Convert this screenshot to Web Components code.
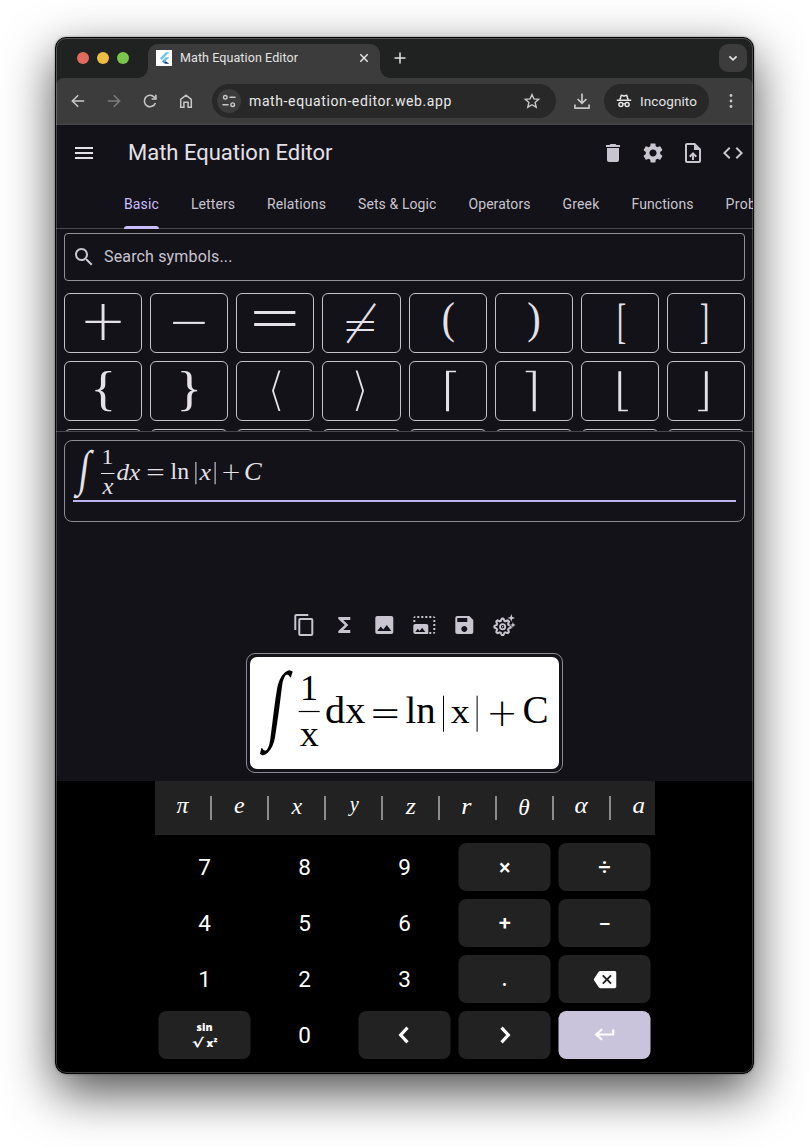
<!DOCTYPE html>
<html lang="en">
<head>
<meta charset="utf-8">
<title>Math Equation Editor</title>
<style>
html,body{margin:0;padding:0;background:#fff;width:809px;height:1147px;overflow:hidden}
body{font-family:Roboto,sans-serif}
</style>
</head>
<body>
<browser-window>
  <tab-strip slot="tabs"></tab-strip>
  <nav-toolbar slot="toolbar"></nav-toolbar>
  <equation-app></equation-app>
</browser-window>
<script>
const SERIF = '"Liberation Serif", serif';
const ctx = document.createElement('canvas').getContext('2d');

const define = (name, html, setup) => customElements.define(name, class extends HTMLElement {
  connectedCallback() {
    if (this.shadowRoot) return;
    const root = this.attachShadow({ mode: 'open' });
    const t = document.createElement('template');
    t.innerHTML = typeof html === 'function' ? html(this) : html;
    root.append(t.content.cloneNode(true));
    if (setup) setup(this, root);
  }
});

/* One glyph run whose ink fills the box x, y, w, h of its drawing. */
const FACES = {
  i: ['italic 400', SERIF], r: ['normal 400', SERIF],
  t: ['normal 200', '"DejaVu Sans Light","DejaVu Sans",sans-serif'],
  d: ['normal 400', '"DejaVu Sans",sans-serif'],
  k: ['normal 400', SERIF],
  h: ['normal 400', '"DejaVu Sans",sans-serif'],
  m: ['normal 500', 'Roboto,sans-serif'],
  b: ['normal 800', '"Open Sans",sans-serif'],
  D: ['normal 700', '"DejaVu Sans",sans-serif']
};
const ink = ([ch, x, y, w, h, f]) => {
  if (ch === 'rule') return `<rect x="${x}" y="${y}" width="${w}" height="${h}" fill="currentColor"/>`;
  const face = f || 'r';
  const [style, family] = FACES[face];
  const slant = face === 'k' ? 0.13 : 0;      /* slanted integral sign */
  const thin = face === 'h' ? 2.1 : 0;        /* hairline brackets: trimmed by a stroke of the ground colour */
  x -= thin / 2; y -= thin / 2; w += thin; h += thin;
  ctx.font = `${style} 100px ${family}`;
  const m = ctx.measureText(ch);
  const sx = (w - slant * h) / (m.actualBoundingBoxLeft + m.actualBoundingBoxRight);
  const sy = h / (m.actualBoundingBoxAscent + m.actualBoundingBoxDescent);
  const base = m.actualBoundingBoxAscent * sy;
  const tx = x + m.actualBoundingBoxLeft * sx + slant * (h - base), ty = y + base;
  const [fs, fw] = style.split(' ');
  return `<text transform="matrix(${sx} 0 ${-slant * sy} ${sy} ${tx} ${ty})" fill="currentColor" style='font:${fs} ${fw} 100px ${family};${thin ? `stroke:#131218;stroke-width:${thin};vector-effect:non-scaling-stroke` : ''}'>${ch.replace('<', '&lt;')}</text>`;
};

/* Math drawing: width, height and a JSON list of runs. */
define('math-ink', el => {
  const w = el.getAttribute('w'), h = el.getAttribute('h');
  return `<style>:host{display:block;width:${w}px;height:${h}px}svg{display:block;overflow:visible}</style>
  <svg width="${w}" height="${h}">${JSON.parse(el.getAttribute('runs')).map(ink).join('')}</svg>`;
});
const math = (w, h, runs) => `<math-ink w="${w}" h="${h}" runs='${JSON.stringify(runs)}'></math-ink>`;

/* Label tracked to a set width. */
define('fit-text', `<style>:host{display:block;white-space:nowrap}span{display:inline-block}</style><span><slot></slot></span>`, (el, root) => {
  const w = +el.getAttribute('w'), s = root.querySelector('span');
  el.style.width = w + 'px';
  s.style.letterSpacing = (w - s.getBoundingClientRect().width) / el.textContent.length + 'px';
});

const ICONS = {
  menu: 'M3 18h18v-2H3v2zm0-5h18v-2H3v2zm0-7v2h18V6H3z',
  delete: 'M6 19c0 1.1.9 2 2 2h8c1.1 0 2-.9 2-2V7H6v12zM19 4h-3.5l-1-1h-5l-1 1H5v2h14V4z',
  settings: 'M19.14 12.94c.04-.3.06-.61.06-.94 0-.32-.02-.64-.07-.94l2.03-1.58c.18-.14.23-.41.12-.61l-1.92-3.32c-.12-.22-.37-.29-.59-.22l-2.39.96c-.5-.38-1.03-.7-1.62-.94l-.36-2.54c-.04-.24-.24-.41-.48-.41h-3.84c-.24 0-.43.17-.47.41l-.36 2.54c-.59.24-1.13.57-1.62.94l-2.39-.96c-.22-.08-.47 0-.59.22L2.74 8.87c-.12.21-.08.47.12.61l2.03 1.58c-.05.3-.09.63-.09.94s.02.64.07.94l-2.03 1.58c-.18.14-.23.41-.12.61l1.92 3.32c.12.22.37.29.59.22l2.39-.96c.5.38 1.03.7 1.62.94l.36 2.54c.05.24.24.41.48.41h3.84c.24 0 .44-.17.47-.41l.36-2.54c.59-.24 1.13-.56 1.62-.94l2.39.96c.22.08.47 0 .59-.22l1.92-3.32c.12-.22.07-.47-.12-.61l-2.01-1.58zM12 15.6c-1.98 0-3.6-1.62-3.6-3.6s1.62-3.6 3.6-3.6 3.6 1.62 3.6 3.6-1.62 3.6-3.6 3.6z',
  upload: 'M14 2H6c-1.1 0-1.99.9-1.99 2L4 20c0 1.1.89 2 1.99 2H18c1.1 0 2-.9 2-2V8l-6-6zm4 18H6V4h7v5h5v11zM8 15.01l1.41 1.41L11 14.84V19h2v-4.16l1.59 1.59L16 15.01 12.01 11 8 15.01z',
  code: 'M9.4 16.6L4.8 12l4.6-4.6L8 6l-6 6 6 6 1.4-1.4zm5.2 0l4.6-4.6-4.6-4.6L16 6l6 6-6 6-1.4-1.4z',
  search: 'M15.5 14h-.79l-.28-.27C15.41 12.59 16 11.11 16 9.5 16 5.91 13.09 3 9.5 3S3 5.91 3 9.5 5.91 16 9.5 16c1.61 0 3.09-.59 4.23-1.57l.27.28v.79l5 4.99L20.49 19l-4.99-5zm-6 0C7.01 14 5 11.99 5 9.5S7.01 5 9.5 5 14 7.01 14 9.5 11.99 14 9.5 14z',
  copy: 'M16 1H4c-1.1 0-2 .9-2 2v14h2V3h12V1zm3 4H8c-1.1 0-2 .9-2 2v14c0 1.1.9 2 2 2h11c1.1 0 2-.9 2-2V7c0-1.1-.9-2-2-2zm0 16H8V7h11v14z',
  functions: 'M18 4H6v2l6.5 6L6 18v2h12v-3h-7l5-5-5-5h7z',
  image: 'M21 19V5c0-1.1-.9-2-2-2H5c-1.1 0-2 .9-2 2v14c0 1.1.9 2 2 2h14c1.1 0 2-.9 2-2zM8.5 13.5l2.5 3.01L14.5 12l4.5 6H5l3.5-4.5z',
  resize: 'M21 15h2v2h-2v-2zm0-4h2v2h-2v-2zm2 8h-2v2c1 0 2-1 2-2zM13 3h2v2h-2V3zm8 4h2v2h-2V7zm0-4v2h2c0-1-1-2-2-2zM1 7h2v2H1V7zm16-4h2v2h-2V3zm0 16h2v2h-2v-2zM3 3C2 3 1 4 1 5h2V3zm6 0h2v2H9V3zM5 3h2v2H5V3zm-2 8c-1.1 0-2 .9-2 2v6c0 1.1.9 2 2 2h12c.6 0 1-.4 1-1v-7c0-1.1-.9-2-2-2H3zm0 8l2.5-3.21 1.79 2.15 2.5-3.22L13 19H3z',
  save: 'M17 3H5c-1.11 0-2 .9-2 2v14c0 1.1.89 2 2 2h14c1.1 0 2-.9 2-2V7l-4-4zm-5 16c-1.66 0-3-1.34-3-3s1.34-3 3-3 3 1.34 3 3-1.34 3-3 3zm3-10H5V5h10v4z',
  backspace: 'M22 3H7c-.69 0-1.23.35-1.59.88L0 12l5.41 8.11c.36.53.9.89 1.59.89h15c1.1 0 2-.9 2-2V5c0-1.1-.9-2-2-2zm-3 12.59L17.59 17 14 13.41 10.41 17 9 15.59 12.59 12 9 8.41 10.41 7 14 10.59 17.59 7 19 8.41 15.41 12 19 15.59z'
};
const line = (d, w = 1.6, extra = '') => `<path d="${d}" fill="none" stroke="currentColor" stroke-width="${w}" ${extra}/>`;
const gear = () => {
  let p = '';
  for (let i = 0; i < 64; i++) {
    const a = i / 64 * Math.PI * 2, r = 7.2 + 1 * Math.max(-1, Math.min(1, Math.cos(8 * a) * 1.6));
    p += (i ? 'L' : 'M') + (10.3 + r * Math.cos(a)).toFixed(2) + ' ' + (13.8 + r * Math.sin(a)).toFixed(2);
  }
  return p + 'Z';
};
const DRAWN = {
  back: line('M18.2 12H6.6M12.2 6.2 6.4 12l5.8 5.8', 1.6),
  forward: line('M5.8 12H17.4M11.8 6.2l5.8 5.8-5.8 5.8', 1.6),
  reload: line('M17.4 14a5.7 5.7 0 1 1-1.2-5.9L17.8 9.6', 1.6) + line('M17.9 5.7v4.3h-4.3', 1.6),
  home: line('M6.7 18.2V10.3L12 6.2l5.3 4.1v7.9h-3.2v-5h-4.2v5z', 1.5),
  tune: line('M13 8.3h5M6 15.7h5', 1.6, 'stroke-linecap="round"') + '<circle cx="8.3" cy="8.3" r="1.8" fill="none" stroke="currentColor" stroke-width="1.4"/><circle cx="15.7" cy="15.7" r="1.8" fill="none" stroke="currentColor" stroke-width="1.4"/>',
  star: line('M12 5.5l1.9 4.4 4.8.4-3.6 3.2 1.1 4.7-4.2-2.5-4.2 2.5 1.1-4.7-3.6-3.2 4.8-.4z', 1.4),
  download: line('M12 4.5v9.5M7.6 10l4.4 4.4L16.4 10', 1.7) + line('M4.9 15.5v3.6h14.2v-3.6', 1.7, 'stroke-linejoin="round"'),
  incognito: line('M4.8 11.3h14.4', 1.5) + line('M7.8 11l1.5-4.8 2.7.8 2.7-.8 1.5 4.8', 1.5, 'stroke-linejoin="round"') + '<circle cx="8.9" cy="15.4" r="2" fill="none" stroke="currentColor" stroke-width="1.5"/><circle cx="15.1" cy="15.4" r="2" fill="none" stroke="currentColor" stroke-width="1.5"/>' + line('M10.7 15q1.3-.7 2.6 0', 1.2),
  dots: '<g fill="currentColor"><circle cx="12" cy="6.5" r="1.4"/><circle cx="12" cy="12" r="1.4"/><circle cx="12" cy="17.5" r="1.4"/></g>',
  close: line('M8.3 8.3l7.4 7.4M15.7 8.3l-7.4 7.4', 1.5),
  add: line('M12 6.5v11M6.5 12h11', 1.5),
  caret: line('M8.4 10.3l3.6 3.5 3.6-3.5', 1.8),
  left: line('M15 4.7 8.2 12 15 19.3', 3.2),
  right: line('M9 4.7 15.8 12 9 19.3', 3.2),
  enter: line('M20.7 6.5v5H4M9.5 6.3 3.7 11.5l5.8 5.3', 2.2),
  magic: line(gear(), 2) + '<circle cx="10.3" cy="13.8" r="2.6" fill="none" stroke="currentColor" stroke-width="1.8"/><circle cx="10.3" cy="13.8" r=".8" fill="currentColor"/><path fill="currentColor" stroke="#131218" stroke-width="1" paint-order="stroke" d="M19 1l1 2.9 2.9 1-2.9 1-1 2.9-1-2.9-2.9-1 2.9-1zM20.6 9l.8 2.2 2.2.8-2.2.8-.8 2.2-.8-2.2-2.2-.8 2.2-.8z"/>',
  flutter: '<path fill="#6fc1f7" d="M14.8 3.5h5.2L8.5 15 5.9 12.4zM14.8 11H20l-5.8 5.8L11.6 14.2z"/><path fill="#0d2f86" d="M11.6 19.4l2.6-2.6 5.8 4h-5.2z"/><path fill="#3a9be8" d="M9 16.8l2.6-2.6 2.6 2.6-2.6 2.6z"/>'
};
define('ui-icon', el => {
  const n = el.getAttribute('name'), s = el.getAttribute('size') || 24;
  return `<style>:host{display:block;flex:none;width:${s}px;height:${s}px}svg{display:block}</style>
  <svg width="${s}" height="${s}" viewBox="0 0 24 24">${DRAWN[n] || `<path fill="currentColor" d="${ICONS[n]}"/>`}</svg>`;
});

define('browser-window', `<style>
:host{display:block;box-sizing:border-box;padding:37px 55px 73px;width:809px;height:1147px}
.frame{display:flex;flex-direction:column;box-sizing:border-box;height:1037px;width:699px;border:1px solid #060606;border-radius:11px;overflow:hidden;position:relative;background:#202221}
.shade{border-radius:11px;height:1037px;width:699px;box-shadow:0 18px 50px rgba(0,0,0,.7),0 0 2px rgba(0,0,0,.5)}
.frame::after{content:"";position:absolute;inset:0;border:1px solid rgba(255,255,255,.22);border-radius:10px;pointer-events:none}
</style><div class="shade"><div class="frame"><slot name="tabs"></slot><slot name="toolbar"></slot><slot></slot></div></div>`);

define('tab-strip', `<style>
:host{display:flex;flex:none;height:40px;box-sizing:border-box;padding:6px 6px 0 21px;color:#e3e3e3;background:#202221}
.lights{display:flex;gap:8px;padding-top:8px;width:71px}
.lights i{width:12px;height:12px;border-radius:50%}
.tab{position:relative;display:flex;width:232px;height:34px;background:#3c3c3c;border-radius:10px 10px 0 0;box-sizing:border-box;padding:0 4px 6px 8px;align-items:center}
.tab::before,.tab::after{content:"";position:absolute;bottom:0;width:10px;height:10px}
.tab::before{left:-10px;background:radial-gradient(circle at 0 0,transparent 9.5px,#3c3c3c 10px)}
.tab::after{right:-10px;background:radial-gradient(circle at 100% 0,transparent 9.5px,#3c3c3c 10px)}
.fav{background:#fff;width:16px;height:16px;margin-right:8px}
fit-text{font-size:12.5px;flex:1;margin-top:-1px}
.add{margin:2px 0 0 8px}
.more{margin-left:auto;width:28px;height:28px;border-radius:9px;background:#3c3c3c;display:grid;place-items:center}
</style>
<div class="lights"><i style="background:#df6b5d"></i><i style="background:#ecbd42"></i><i style="background:#7ac74b"></i></div>
<div class="tab"><div class="fav"><ui-icon name="flutter" size="16"></ui-icon></div><fit-text w="118">Math Equation Editor</fit-text><div style="flex:1"></div><ui-icon name="close"></ui-icon></div>
<ui-icon class="add" name="add"></ui-icon>
<div class="more"><ui-icon name="caret"></ui-icon></div>`);

define('nav-toolbar', `<style>
:host{display:block;flex:none;height:47px;background:#202221;color:#c7c7c7}
.bar{display:flex;align-items:center;height:47px;box-sizing:border-box;padding:0 10px;background:#3c3c3c;border-bottom:1px solid #47474a;border-radius:8px 8px 0 0}
.nav{display:flex;gap:12px}
.dim{color:#7c7c7c}
.url{display:flex;align-items:center;box-sizing:border-box;width:344px;height:34px;margin-left:14px;padding:0 12px 0 5px;border-radius:17px;background:#282828;color:#e8e8e8}
.chip{width:24px;height:24px;border-radius:50%;background:#3c3c3c;margin-right:8px}
.url fit-text{font-size:14px}
.url ui-icon:last-child{margin-left:auto;color:#c7c7c7}
.inc{display:flex;align-items:center;box-sizing:border-box;width:105px;height:34px;border-radius:17px;background:#282828;padding-left:8px;margin-left:10px;color:#e3e3e3}
.inc fit-text{font-size:13.5px;font-weight:450;margin-left:4px}
.bar > ui-icon{margin-left:14px}
</style><div class="bar">
<div class="nav"><ui-icon name="back"></ui-icon><ui-icon class="dim" name="forward"></ui-icon><ui-icon name="reload"></ui-icon><ui-icon name="home"></ui-icon></div>
<div class="url"><div class="chip"><ui-icon name="tune"></ui-icon></div><fit-text w="203">math-equation-editor.web.app</fit-text><ui-icon name="star"></ui-icon></div>
<ui-icon name="download"></ui-icon>
<div class="inc"><ui-icon name="incognito"></ui-icon><fit-text w="57">Incognito</fit-text></div>
<ui-icon name="dots" style="margin-left:10px"></ui-icon></div>`);

define('app-header', `<style>
:host{display:block;height:104px;box-sizing:border-box;border-bottom:1px solid #48464c;color:#e4e1e9}
.top{display:flex;align-items:center;height:56px;padding:0 7px 0 16px}
.top fit-text{font-size:22px;margin:-2px 0 0 32px}
.acts{display:flex;gap:16px;margin-left:auto;color:#c9c5d0;padding-right:1px}
</style><div class="top"><ui-icon name="menu"></ui-icon><fit-text w="204.5">Math Equation Editor</fit-text>
<div class="acts"><ui-icon name="delete"></ui-icon><ui-icon name="settings"></ui-icon><ui-icon name="upload"></ui-icon><ui-icon name="code"></ui-icon></div></div>
<category-tabs></category-tabs>`);

define('category-tabs', () => `<style>
:host{display:flex;gap:32px;height:48px;padding-left:68px;overflow:hidden;font-size:14px;font-weight:450;color:#c9c5d0}
div{flex:none;height:48px;line-height:47px;box-sizing:border-box}
.on{color:#cabeff;position:relative}
.on::after{content:"";position:absolute;left:0;right:0;bottom:0;height:3px;border-radius:3px 3px 0 0;background:#cabeff}
</style>` + [['Basic', 35], ['Letters', 44], ['Relations', 59], ['Sets &amp; Logic', 78.5], ['Operators', 62], ['Greek', 37], ['Functions', 62], ['Probability', 70]]
  .map(([t, w], i) => `<div class="${i ? '' : 'on'}"><fit-text w="${w}">${t}</fit-text></div>`).join(''));

const cellLeft = i => 64 + 86.125 * (i % 8);
const SYMBOLS = [
  ['+', 85, 304.7, 36, 36.3, 't'], ['−', 173, 321.6, 32.3, 2.6, 't'], ['=', 254, 311, 42, 15, 't'], ['≠', 346.7, 302.3, 29.6, 41.4, 't'],
  ['(', 442.7, 302.7, 10.6, 40.3, 'r'], [')', 528, 302.7, 10.5, 40.3, 'r'], ['[', 618.7, 303, 6.3, 40, 'r'], [']', 700.7, 303, 6.3, 40, 'r'],
  ['{', 95.3, 370.7, 16, 41, 'r'], ['}', 181.3, 370.7, 15.9, 41, 'r'], ['⟨', 271.7, 370.3, 9.3, 41, 'h'], ['⟩', 355.7, 370.3, 9.3, 41, 'h'],
  ['⌈', 445, 370.5, 11, 40.8, 'h'], ['⌉', 525, 370.5, 11, 40.8, 'h'], ['⌊', 617.7, 370.5, 10.5, 40.8, 'h'], ['⌋', 697.7, 370.5, 10.5, 40.8, 'h']
];
define('symbol-grid', () => `<style>
:host{display:grid;grid-template-columns:repeat(8,1fr);grid-auto-rows:60px;gap:8px;height:138px;overflow:hidden;margin:12px 8px 0;color:#e4e1e9}
div{box-sizing:border-box;border:1px solid #c4c1c9;border-radius:6px}
math-ink{margin:-1px}
</style>` + SYMBOLS.map(([c, x, y, w, h, f], i) => `<div>${math(78, 60, [[c, x - cellLeft(i), y - (i < 8 ? 293 : 361), w, h, f]])}</div>`).join('') + '<div></div>'.repeat(8));

define('search-field', `<style>
:host{display:flex;align-items:center;box-sizing:border-box;height:48px;margin:4px 8px 0;padding-left:7px;border:1px solid #929099;border-radius:4px;color:#c9c5d0}
fit-text{font-size:16px;margin:-2px 0 0 8px}
</style><ui-icon name="search"></ui-icon><fit-text w="128.5">Search symbols...</fit-text>`);

const shift = (runs, dx, dy) => runs.map(([c, x, y, ...r]) => [c, x - dx, y - dy, ...r]);
const INPUT = [
  ['∫', 73.3, 449, 21, 49, 'k'], ['1', 103.5, 450, 8.5, 14], ['rule', 101, 473, 13.5, 1], ['x', 102, 483, 11.3, 11, 'i'],
  ['dx', 117.3, 463.5, 22.9, 16.5, 'i'], ['=', 147.7, 469.5, 15.6, 6, 't'], ['ln', 171, 463.7, 17.8, 16],
  ['rule', 195.4, 462, 1, 22.3], ['x', 199, 469, 12, 10.9, 'i'], ['rule', 214.6, 462, 1, 22.3], ['+', 223.3, 465, 15.7, 15.7, 't'], ['C', 245.3, 463.5, 16.7, 16.7, 'i']
];
const PREVIEW = [
  ['∫', 259.3, 670, 34, 85.7, 'k'], ['1', 303, 675.7, 13, 24.3], ['rule', 298.7, 710.9, 21, 1.2], ['x', 299.7, 730, 18.7, 16],
  ['dx', 326.3, 696.7, 38.7, 26.6], ['=', 373, 709.3, 24.4, 8.7, 't'], ['ln', 406.3, 697.3, 29, 25.9],
  ['rule', 443, 695.7, 1, 36], ['x', 450.7, 707.3, 18.6, 15.9], ['rule', 476.6, 695.7, 1, 36], ['+', 490, 701, 24.2, 25, 't'], ['C', 524, 696.7, 22.7, 26.6]
];
define('equation-input', () => `<style>
:host{display:block;box-sizing:border-box;height:82px;margin:8px 8px 0;border:1px solid #8c8a92;border-radius:8px;padding:0 8px;color:#e4e1e9}
.line{height:61px;box-sizing:border-box;border-bottom:2px solid #beb3f0}
</style><div class="line">${math(660, 59, shift(INPUT, 73, 441))}</div>`);
define('equation-preview', () => `<style>
:host{display:block;box-sizing:border-box;width:317px;height:120px;margin:16px auto 0 190px;padding:3px;border:1px solid #8c8a92;border-radius:9px}
div{background:#fff;width:309px;height:112px;border-radius:7px;color:#000}
</style><div>${math(309, 112, shift(PREVIEW, 250, 657))}</div>`);
define('export-actions', `<style>:host{display:flex;gap:16px;justify-content:center;padding:91px 0 0 0;margin-left:-1px;transform:translateX(.3px);color:#c9c5d0}</style>
<ui-icon name="copy"></ui-icon><ui-icon name="functions"></ui-icon><ui-icon name="image"></ui-icon><ui-icon name="resize"></ui-icon><ui-icon name="save"></ui-icon><ui-icon name="magic"></ui-icon>`);

const VARS = [['π', 176, 803, 12.7, 10.5, 'i'], ['e', 234.7, 802.7, 9.6, 10.8, 'i'], ['x', 291, 802.7, 11, 10.8, 'i'], ['y', 348, 801, 11, 14.7, 'i'],
  ['z', 405.3, 802.7, 10.4, 10.8, 'i'], ['r', 462.3, 802.7, 9.4, 10.8, 'i'], ['θ', 519.3, 800, 10, 15.7, 'i'], ['α', 575, 802.7, 13.3, 10.8, 'i'], ['a', 633, 802.7, 11.3, 10.8, 'i']];
define('variable-bar', () => `<style>
:host{display:flex;align-items:center;height:54px;background:#222;overflow:hidden;color:#fff}
i{flex:none;width:2px;height:24px;background:#8b8b8b}
math-ink{flex:none}
</style>` + VARS.map(([c, x, y, w, h, f], i) => (i ? '<i></i>' : '') + math(i ? 55 : 55.5, 54, [[c, x - (i ? 155 + 57 * i : 154.5), y - 781, w, h, f]])).join(''));

define('key-cap', el => `<style>
:host{display:flex;flex-direction:column;align-items:center;justify-content:center;border-radius:8px;font-size:22.5px;line-height:48px;color:#fff}
:host([fn]){background:#222}:host([go]){background:#cac3dc}
</style>${el.hasAttribute('digit') ? '<span><slot></slot></span>' : '<slot></slot>'}`);
const key = (body, a = 'digit') => `<key-cap ${a}>${body}</key-cap>`;
const op = (c, x, y, w, h, ox, oy, f = 'm') => key(math(92, 48, [[c, x - ox, y - oy, w, h, f]]), 'fn');
define('math-keyboard', () => `<style>
:host{display:block;flex:1;background:#000;padding-left:98.5px}
.pad{width:500px}
.keys{display:grid;grid-template-columns:repeat(5,92px);grid-auto-rows:48px;gap:8px;padding:8px 4px;margin-left:.5px;transform:translateX(-.5px)}
</style><div class="pad"><variable-bar></variable-bar><div class="keys">` +
  key('7') + key('8') + key('9') + op('×', 499.7, 862.7, 10, 10, 458.5, 843) + op('÷', 599, 861.3, 11, 12, 558.5, 843) +
  key('4') + key('5') + key('6') + op('+', 499.3, 917.5, 10.7, 11, 458.5, 899) + op('−', 599.8, 922.5, 9.7, 2, 558.5, 899) +
  key('1') + key('2') + key('3') + op('.', 503, 983.7, 3, 3, 458.5, 955) + key('<ui-icon name="backspace" size="23"></ui-icon>', 'fn') +
  key(math(92, 48, [['sin', 197, 1022.7, 15, 8.3, 'b'], ['√', 192.3, 1036.5, 11.7, 10.7, 'D'], ['x²', 206.5, 1037.7, 10.7, 9, 'b']].map(([c, x, y, ...r]) => [c, x - 158.5, y - 1011, ...r])), 'fn') +
  key('0') + key('<ui-icon name="left"></ui-icon>', 'fn') + key('<ui-icon name="right"></ui-icon>', 'fn') + key('<ui-icon name="enter"></ui-icon>', 'go') + '</div></div>');

define('equation-app', `<style>
:host{display:flex;flex-direction:column;flex:1;background:#131218;min-height:0}
.work{flex:none;height:350px;border-top:1px solid #48464c;box-sizing:border-box}
app-header,search-field,symbol-grid{flex:none}
</style><app-header></app-header><search-field></search-field><symbol-grid></symbol-grid>
<div class="work"><equation-input></equation-input><export-actions></export-actions><equation-preview></equation-preview></div>
<math-keyboard></math-keyboard>`);
</script>
</body>
</html>
